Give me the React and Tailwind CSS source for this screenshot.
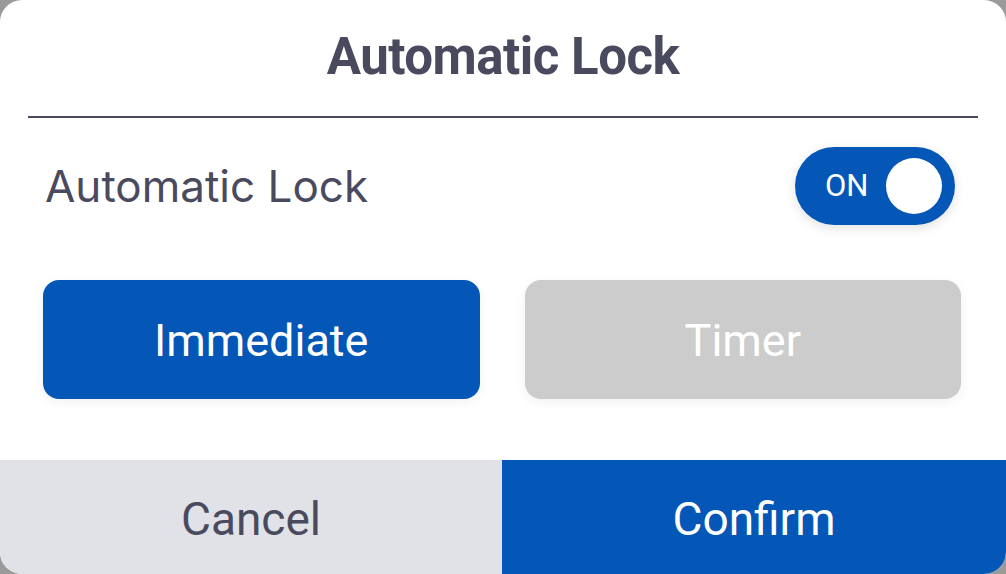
import React, { useState } from 'react'

function Toggle({ on, onChange }) {
  return (
    <button
      onClick={() => onChange(!on)}
      className="flex h-[78px] w-[160px] items-center justify-between rounded-full bg-[#0457b7] pl-[30px] pr-[13px] shadow-[0_3px_12px_rgba(0,0,0,0.12)]"
    >
      <span className="text-[31px] leading-none text-white" style={{ fontFamily: 'Roboto, sans-serif' }}>
        {on ? 'ON' : 'OFF'}
      </span>
      <span className="h-[56px] w-[56px] rounded-full bg-white"></span>
    </button>
  )
}

export default function App() {
  const [enabled, setEnabled] = useState(true)
  const [mode, setMode] = useState('immediate')

  return (
    <div className="h-[574px] w-[1006px] bg-[#9a9a9a]">
      <div
        className="flex h-full w-full flex-col overflow-hidden rounded-[22px] bg-white"
        style={{ fontFamily: 'Roboto, sans-serif' }}
      >
        {/* Header */}
        <div className="flex h-[116px] shrink-0 items-center justify-center">
          <h1 className="pb-[2px] text-[51px] font-bold tracking-[-0.5px] text-[#4a4a5e]">Automatic Lock</h1>
        </div>
        <div className="mx-[28px] h-[2px] shrink-0 bg-[#4a4a5e]"></div>

        {/* Toggle row */}
        <div className="flex h-[135px] shrink-0 items-center justify-between pl-[45px] pr-[51px]">
          <span className="text-[44px] text-[#4a4a5e]" style={{ fontFamily: 'Inter, sans-serif' }}>
            Automatic Lock
          </span>
          <Toggle on={enabled} onChange={setEnabled} />
        </div>

        {/* Mode buttons */}
        <div className="mt-[27px] flex shrink-0 gap-[45px] pl-[43px] pr-[45px]">
          <button
            onClick={() => setMode('immediate')}
            className={`h-[119px] flex-1 rounded-[16px] pt-[3px] text-[45px] text-white shadow-[0_3px_12px_rgba(0,0,0,0.06)] ${mode === 'immediate' ? 'bg-[#0457b7]' : 'bg-[#cccccc]'}`}
          >
            Immediate
          </button>
          <button
            onClick={() => setMode('timer')}
            className={`h-[119px] flex-1 rounded-[16px] pt-[3px] text-[45px] text-white shadow-[0_3px_12px_rgba(0,0,0,0.06)] ${mode === 'timer' ? 'bg-[#0457b7]' : 'bg-[#cccccc]'}`}
          >
            Timer
          </button>
        </div>

        <div className="flex-1"></div>

        {/* Footer */}
        <div className="flex h-[114px] shrink-0">
          <button className="w-[502px] bg-[#e1e2e7] pt-[4px] text-[46px] text-[#4a4a5e]">Cancel</button>
          <button className="flex-1 bg-[#0457b7] pt-[4px] text-[46px] text-white">Confirm</button>
        </div>
      </div>
    </div>
  )
}
